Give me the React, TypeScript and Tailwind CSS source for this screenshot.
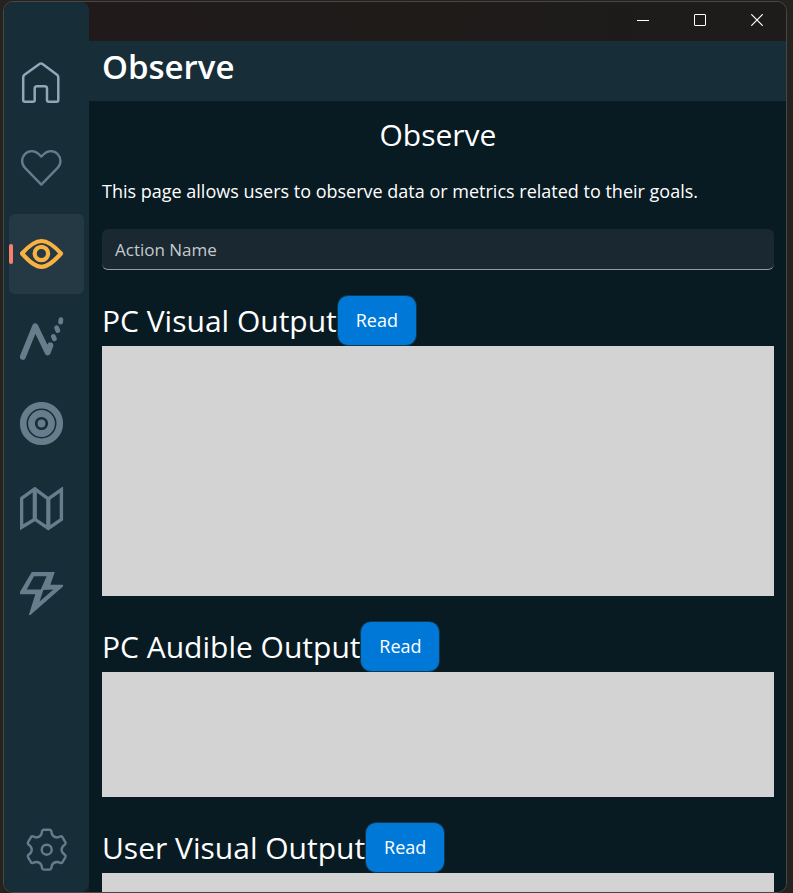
import type { ReactNode } from "react";

function HomeIcon() {
  return (
    <svg viewBox="0 0 44 44" className="size-11" fill="none" stroke="currentColor" strokeWidth="2.5" strokeLinejoin="round" aria-hidden="true">
      <path d="M19.8 1.8 Q21 1 22.2 1.8 L37 12.8 Q38.3 13.8 38.3 15.4 V38 Q38.3 39.8 36.5 39.8 H28.8 Q27 39.8 27 38 V26.6 Q27 24.3 24.7 24.3 H17 Q14.7 24.3 14.7 26.6 V38 Q14.7 39.8 12.9 39.8 H5 Q3.2 39.8 3.2 38 V15.4 Q3.2 13.8 4.5 12.8 Z" />
    </svg>
  );
}

function HeartIcon() {
  return (
    <svg viewBox="0 0 44 44" className="size-11" fill="none" stroke="currentColor" strokeWidth="2.4" strokeLinejoin="round" aria-hidden="true">
      <path d="M21.3 9.6 L18.6 7 C14.6 3.1 8.6 3.2 5 7 C1.2 11 1.2 17 5 20.9 L21.3 37.6 L37.6 20.9 C41.4 17 41.4 11 37.6 7 C34 3.2 28 3.1 24 7 Z" />
    </svg>
  );
}

function EyeIcon() {
  return (
    <svg viewBox="0 0 44 44" className="size-11" fill="none" stroke="currentColor" strokeWidth="4.2" strokeLinejoin="round" aria-hidden="true">
      <path d="M2 21.5 C10 12.5 16 9 21.5 9 C27 9 33 12.5 41 21.5 C33 30.5 27 34.8 21.5 34.8 C16 34.8 10 30.5 2 21.5 Z" />
      <circle cx="21.4" cy="21.5" r="6.7" />
    </svg>
  );
}

function PeaksIcon() {
  return (
    <svg viewBox="0 0 44 44" className="size-11" fill="none" stroke="currentColor" strokeLinecap="round" strokeLinejoin="round" aria-hidden="true">
      <path strokeWidth="6" d="M2.8 39.8 L15.2 9.4 L27.7 35.4 L30.3 28.4" />
      <path strokeWidth="4.8" d="M33.4 19.4 L34.4 21.8 M36.7 10.8 L37.8 13.6 M40.9 2.6 L40.6 5.2" />
    </svg>
  );
}

function TargetIcon() {
  return (
    <svg viewBox="0 0 44 44" className="size-11" fill="none" stroke="currentColor" aria-hidden="true">
      <circle cx="21.5" cy="21.5" r="18.3" strokeWidth="6.6" />
      <circle cx="21.5" cy="21.5" r="10" strokeWidth="6.8" />
      <circle cx="21.5" cy="21.5" r="3.9" fill="currentColor" stroke="none" />
    </svg>
  );
}

function MapIcon() {
  return (
    <svg viewBox="0 0 44 44" className="size-11" fill="none" stroke="currentColor" strokeWidth="3.4" aria-hidden="true">
      <path d="M1.6 11.4 L14.8 1.8 L28.3 11.8 L41.4 2.6 V32.4 L28.3 41.4 L14.8 32.2 L1.6 40.2 Z" />
      <path strokeWidth="4.2" d="M14.8 1.8 V32.2 M28.3 11.8 V41.4" />
    </svg>
  );
}

function BoltIcon() {
  return (
    <svg viewBox="0 0 44 44" className="size-11" fill="currentColor" fillRule="evenodd" aria-hidden="true">
      <path d="M11.8 0 H34.8 L30.4 12.8 H43 V14.6 L10.4 43 H8.8 L15.3 22.2 H0 V19.8 Z M14 4.3 L6.8 17.4 H20.8 L26.6 4.3 Z M23.4 18 L19.6 29.6 L33.4 17.4 Z" />
    </svg>
  );
}

const teeth = [0, 60, 120, 180, 240, 300];

function point(x: number, y: number, degrees: number) {
  const a = (degrees * Math.PI) / 180;
  const px = 21.7 + x * Math.cos(a) - y * Math.sin(a);
  const py = 21.7 + x * Math.sin(a) + y * Math.cos(a);
  return `${px.toFixed(2)} ${py.toFixed(2)}`;
}

function gearOutline() {
  return (
    teeth
      .map(
        (t, i) =>
          `${i === 0 ? "M" : "L"}${point(-5.2, -15.6, t)} L${point(-4.6, -18.6, t)} Q${point(-4.3, -19.8, t)} ${point(-3, -19.9, t)} L${point(3, -19.9, t)} Q${point(4.3, -19.8, t)} ${point(4.6, -18.6, t)} L${point(5.2, -15.6, t)} Q${point(6.9, -11.9, t)} ${point(-5.2, -15.6, t + 60)}`,
      )
      .join(" ") + " Z"
  );
}

function GearIcon() {
  return (
    <svg viewBox="0 0 44 44" className="size-11" fill="none" stroke="currentColor" strokeWidth="2.4" strokeLinejoin="round" aria-hidden="true">
      <path d={gearOutline()} />
      <circle cx="21.7" cy="21.7" r="5" />
    </svg>
  );
}

const navItems: { label: string; icon: ReactNode; tone: string; active?: boolean }[] = [
  { label: "Home", icon: <HomeIcon />, tone: "text-[#90a7b7]" },
  { label: "Favorites", icon: <HeartIcon />, tone: "text-[#657c8c]" },
  { label: "Observe", icon: <EyeIcon />, tone: "text-[#f9b242]", active: true },
  { label: "Trends", icon: <PeaksIcon />, tone: "text-[#677d8b]" },
  { label: "Goals", icon: <TargetIcon />, tone: "text-[#677d8b]" },
  { label: "Map", icon: <MapIcon />, tone: "text-[#677d8b]" },
  { label: "Actions", icon: <BoltIcon />, tone: "text-[#677d8b]" },
];

function Sidebar() {
  return (
    <nav className="flex w-[85px] shrink-0 flex-col justify-between rounded-r-lg bg-[#172d38] px-[5px] pt-[42px] pb-0.5">
      <div className="flex flex-col gap-[5px]">
        {navItems.map((item) => (
          <button
            key={item.label}
            type="button"
            aria-label={item.label}
            aria-current={item.active ? "page" : undefined}
            className={`flex h-20 items-center rounded-md ${item.tone} ${item.active ? "bg-[#253944]" : ""}`}
          >
            <span className={`mr-[7px] h-5 w-1 rounded-full ${item.active ? "bg-[#fa8069]" : ""}`} />
            {item.icon}
          </button>
        ))}
      </div>
      <button type="button" aria-label="Settings" className="flex h-20 items-center justify-center rounded-md text-[#657c8c]">
        <GearIcon />
      </button>
    </nav>
  );
}

function TitleBar() {
  const control = "flex w-[57px] items-center justify-center text-white";
  return (
    <div className="flex h-[39px] shrink-0 justify-end bg-linear-to-r from-[#201b1a] to-[#1d1c1a] pr-px pb-[3px]">
      <button type="button" aria-label="Minimize" className={control}>
        <svg viewBox="0 0 12 12" className="size-3" stroke="currentColor" fill="none"><path d="M0 6.5 H12" /></svg>
      </button>
      <button type="button" aria-label="Maximize" className={control}>
        <svg viewBox="0 0 12 12" className="size-3" stroke="currentColor" fill="none"><rect x="0.5" y="0.5" width="11" height="11" rx="0.5" /></svg>
      </button>
      <button type="button" aria-label="Close" className={control}>
        <svg viewBox="0 0 12 12" className="size-3" stroke="currentColor" strokeWidth="1.2" fill="none"><path d="M0.3 0.3 L11.7 11.7 M11.7 0.3 L0.3 11.7" /></svg>
      </button>
    </div>
  );
}

function OutputSection({ title, height }: { title: string; height: string }) {
  return (
    <section className="mt-[25px]">
      <div className="flex h-[51px] items-start">
        <h3 className="text-[30px] leading-[52px] whitespace-nowrap">{title}</h3>
        <button type="button" className="h-[51px] w-20 rounded-[11px] border border-[#12384f] bg-[#0078d7] text-[18px]">
          Read
        </button>
      </div>
      <div className={`bg-[#d3d3d3] ${height}`} />
    </section>
  );
}

export default function App() {
  return (
    <div className="h-screen overflow-hidden bg-[#24231f] pt-px pr-[6px] pl-[3px] font-['Open_Sans',sans-serif] text-white">
      <div className="flex h-full overflow-hidden rounded-[10px] border border-[#484743] bg-[#201b1a]">
        <Sidebar />
        <div className="flex min-w-0 flex-1 flex-col">
          <TitleBar />
          <header className="flex h-[60px] shrink-0 items-center bg-[#172d38] px-[13px] pb-2">
            <h1 className="text-[33px] leading-[52px] font-semibold">Observe</h1>
          </header>
          <main className="min-h-0 flex-1 overflow-hidden bg-[#081a22] px-3 pt-[13px] pl-[13px]">
            <h2 className="text-center text-[30px] leading-[42px]">Observe</h2>
            <p className="mt-[23px] text-[18px] leading-6">This page allows users to observe data or metrics related to their goals.</p>
            <input
              type="text"
              aria-label="Action Name"
              placeholder="Action Name"
              className="mt-[26px] block h-[41px] w-full rounded-md border-b border-[#8f9ca5] bg-[#192831] px-[13px] text-[17px] outline-none placeholder:text-[#c5cacd]"
            />
            <OutputSection title="PC Visual Output" height="h-[250px]" />
            <OutputSection title="PC Audible Output" height="h-[125px]" />
            <OutputSection title="User Visual Output" height="h-[125px]" />
          </main>
        </div>
      </div>
    </div>
  );
}
